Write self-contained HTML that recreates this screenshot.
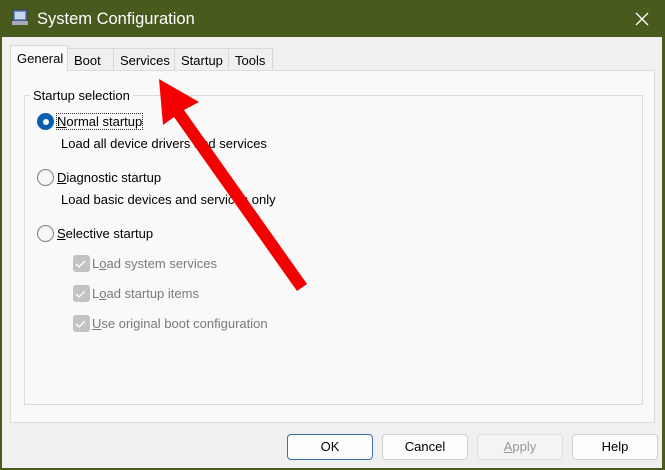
<!DOCTYPE html>
<html><head><style>
*{margin:0;padding:0;box-sizing:border-box}
body{width:665px;height:470px;overflow:hidden;background:#485a1e;font-family:"Liberation Sans",sans-serif;font-size:13px;color:#000;position:relative}
.win{position:absolute;left:2px;top:37px;width:660px;height:431px;background:#f0f0f0}
.title{position:absolute;left:37px;top:10px;color:#fff;font-size:16.5px}
.tab{position:absolute;top:0;height:23px;border:1px solid #d9d9d9;border-bottom:none;background:#f0f0f0;padding:4px 0 0 6px;font-size:13px}
.panel{position:absolute;left:10px;top:70px;width:645px;height:353px;background:#f9f9f9;border:1px solid #dcdcdc}
.group{position:absolute;left:24px;top:95px;width:619px;height:310px;border:1px solid #dcdcdc}
.gl{position:absolute;left:30px;top:88px;background:#f9f9f9;padding:0 3px}
.t{position:absolute;white-space:nowrap}
.radio{position:absolute;width:17px;height:17px;border-radius:50%;border:1px solid #808080;background:#f6f6f6}
.radio.on{background:#0b5fb0;border-color:#0b5fb0}
.radio.on::after{content:"";position:absolute;left:4.5px;top:4.5px;width:6px;height:6px;border-radius:50%;background:#fff}
.cb{position:absolute;width:17px;height:17px;border-radius:3px;background:#c3c3c3}
.g{color:#7a7a7a}
.btn{position:absolute;top:434px;width:86px;height:26px;border:1px solid #d0d0d0;border-radius:4px;background:#fdfdfd;text-align:center;line-height:24px}
</style></head><body>
<svg style="position:absolute;left:11px;top:8px" width="18" height="18"><rect x="2" y="2" width="14" height="11" fill="#6d8fc9" stroke="#334" stroke-width="1"/><rect x="4" y="4" width="10" height="7" fill="#c5d6f0"/><rect x="1" y="13" width="16" height="4" fill="#aab" /></svg>
<div class="title">System Configuration</div>
<svg style="position:absolute;left:635px;top:12px" width="14" height="14"><path d="M1 1L13 13M13 1L1 13" stroke="#fff" stroke-width="1.3"/></svg>
<div class="win"></div>
<div class="tab" style="left:67px;top:48px;width:47px">Boot</div>
<div class="tab" style="left:113px;top:48px;width:62px">Services</div>
<div class="tab" style="left:174px;top:48px;width:55px">Startup</div>
<div class="tab" style="left:228px;top:48px;width:45px">Tools</div>
<div class="panel"></div>
<div class="tab" style="left:10px;top:45px;width:58px;height:26px;background:#f9f9f9;padding-top:5px">General</div>
<div class="group"></div>
<div class="gl">Startup selection</div>
<div class="radio on" style="left:37px;top:113px"></div>
<div class="t" style="left:57px;top:114px;outline:1px dotted #333"><u>N</u>ormal startup</div>
<div class="t" style="left:61px;top:136px">Load all device drivers and services</div>
<div class="radio" style="left:37px;top:169px"></div>
<div class="t" style="left:57px;top:170px"><u>D</u>iagnostic startup</div>
<div class="t" style="left:61px;top:192px">Load basic devices and services only</div>
<div class="radio" style="left:37px;top:225px"></div>
<div class="t" style="left:57px;top:226px"><u>S</u>elective startup</div>
<div class="cb" style="left:73px;top:255px"></div><div class="t g" style="left:92px;top:256px">L<u>o</u>ad system services</div>
<div class="cb" style="left:73px;top:285px"></div><div class="t g" style="left:92px;top:286px">L<u>o</u>ad startup items</div>
<div class="cb" style="left:73px;top:315px"></div><div class="t g" style="left:92px;top:316px"><u>U</u>se original boot configuration</div>
<svg style="position:absolute;left:0;top:0" width="665" height="470">
<path d="M76 264l3 3 6-6M76 294l3 3 6-6M76 324l3 3 6-6" stroke="#fff" stroke-width="1.3" fill="none"/>
<path d="M159 79L199 102L184 110L307 284L297 291L174 117L163 125Z" fill="#f40000"/>
</svg>
<div class="btn" style="left:287px;border-color:#3b6fa8">OK</div>
<div class="btn" style="left:382px">Cancel</div>
<div class="btn" style="left:477px;background:#f4f4f4;color:#9a9a9a;border-color:#e0e0e0"><u>A</u>pply</div>
<div class="btn" style="left:572px">Help</div>
</body></html>
